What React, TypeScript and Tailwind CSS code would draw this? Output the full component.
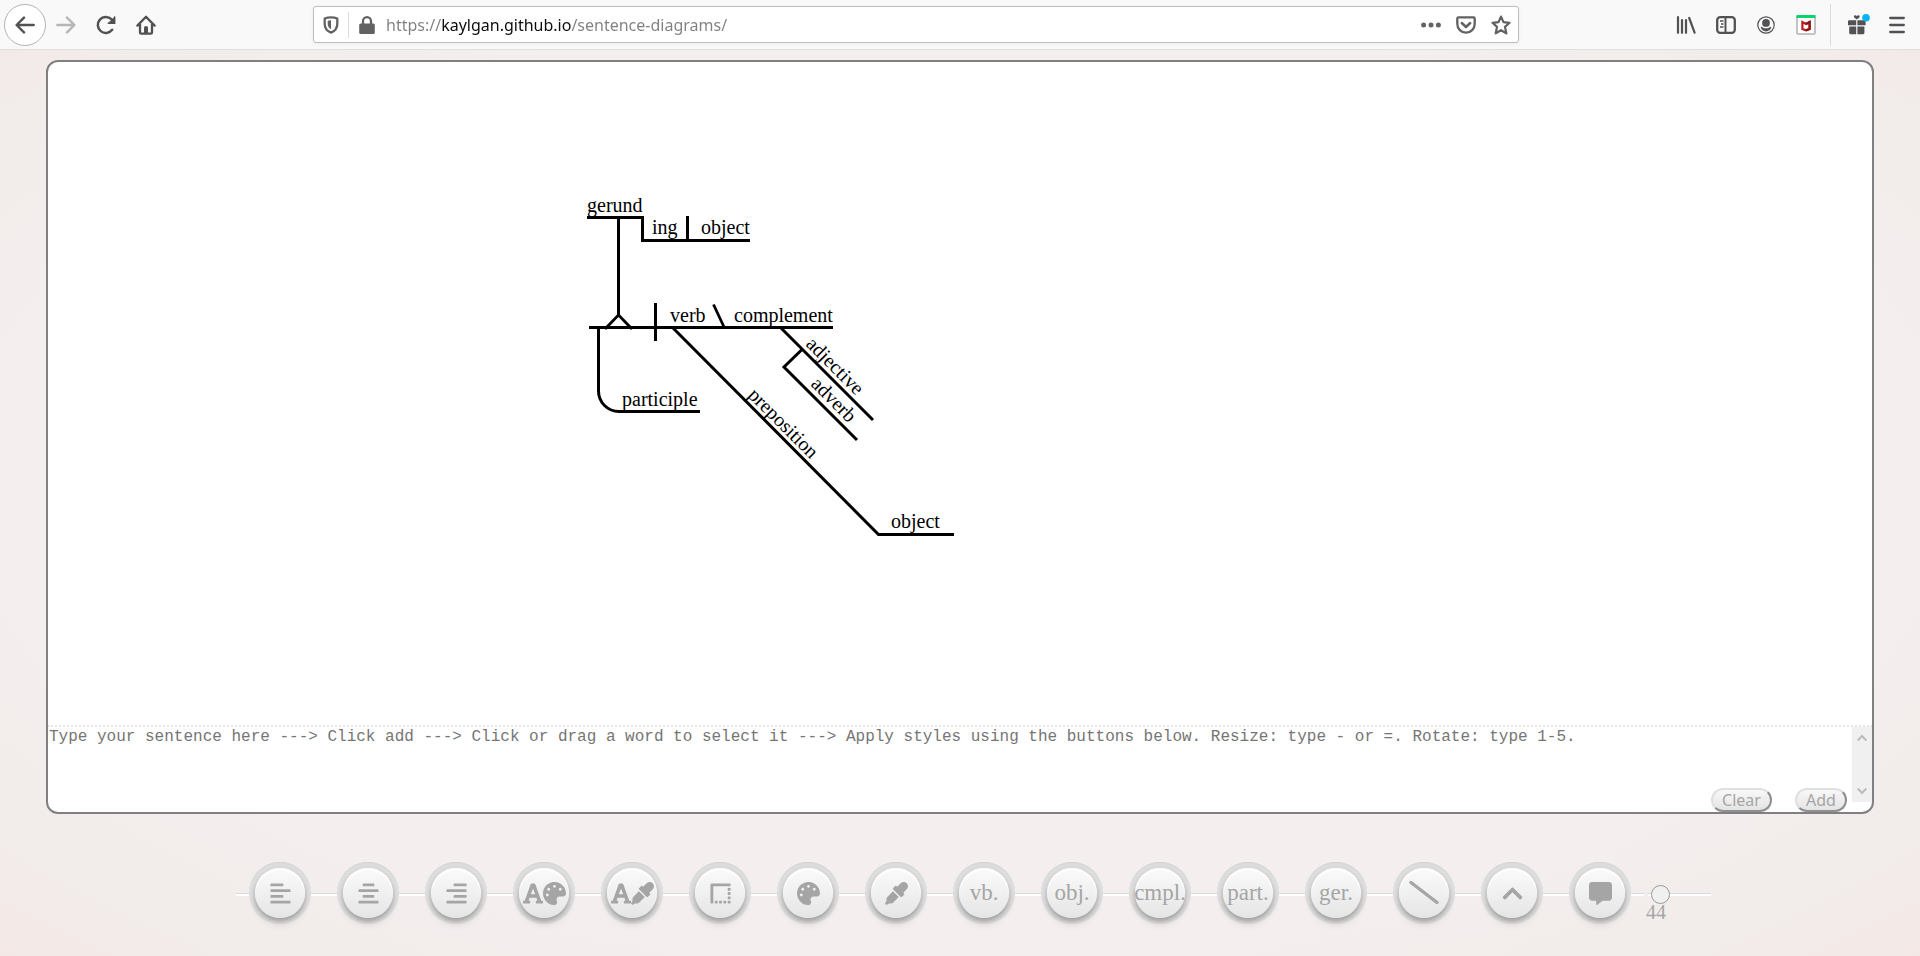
import { useState, type ReactNode } from "react";
import {
  FaAlignCenter,
  FaAlignLeft,
  FaAlignRight,
  FaBorderStyle,
  FaChevronUp,
  FaCommentAlt,
  FaEyeDropper,
  FaFont,
  FaPalette,
} from "react-icons/fa";

function BarButton({ label, className, children }: { label: string; className: string; children: ReactNode }) {
  return (
    <button type="button" aria-label={label} className={`flex h-10 shrink-0 items-center justify-center ${className}`}>
      {children}
    </button>
  );
}

function BrowserBar() {
  return (
    <header className="flex h-[50px] shrink-0 items-center border-b border-[#dedede] bg-[#f9f9fa] px-1 text-[#525254]">
      <nav className="flex shrink-0 items-center" aria-label="Browser">
        <button
          type="button"
          aria-label="Back"
          className="flex size-[42px] items-center justify-center rounded-full border border-[#b5b5b6] bg-white"
        >
          <svg width="20" height="18" viewBox="0 0 20 18" fill="none" stroke="currentColor" strokeWidth="2.4" strokeLinecap="round" strokeLinejoin="round">
            <path d="M18.7 9H2M9 1.6 1.6 9 9 16.4" />
          </svg>
        </button>
        <BarButton label="Forward" className="w-10 text-[#b6b6b7]">
          <svg width="20" height="18" viewBox="0 0 20 18" fill="none" stroke="currentColor" strokeWidth="2.4" strokeLinecap="round" strokeLinejoin="round">
            <path d="M1.3 9H18M11 1.6 18.4 9 11 16.4" />
          </svg>
        </BarButton>
        <BarButton label="Reload" className="w-10">
          <svg width="20" height="20" viewBox="0 0 20 20" fill="none" stroke="currentColor" strokeWidth="2.5" strokeLinecap="round">
            <path d="M16.2 14.8A8 8 0 1 1 15.4 4.2L17 6" />
            <path d="M18.9 1.4V8.6H11.6Z" fill="currentColor" stroke="none" />
            <path d="M18.6 2V8.2H12.4" strokeWidth="1.6" />
          </svg>
        </BarButton>
        <BarButton label="Home" className="w-10">
          <svg width="20" height="20" viewBox="0 0 20 20" fill="none" stroke="currentColor" strokeWidth="2.3" strokeLinecap="round" strokeLinejoin="round">
            <path d="M1.4 10.6 10 1.8l8.6 8.8M4 9v8.4q0 1.2 1.2 1.2h9.6q1.2 0 1.2-1.2V9" />
            <path d="M8 18.6v-6q0-1.6 2-1.6t2 1.6v6Z" fill="currentColor" stroke="none" />
          </svg>
        </BarButton>
      </nav>

      <div className="mx-[147px] flex h-[37px] min-w-0 flex-1 items-center rounded-[3px] border border-[#bdbdbe] bg-white text-[#626264] shadow-[0_1px_4px_rgba(0,0,0,0.06)]">
        <BarButton label="Tracking protection" className="w-[34px]">
          <svg width="16" height="18" viewBox="0 0 16 18">
            <path d="M8 1.3C10.500 1.300 12.500 1.700 14.300 2.500V8C14.300 12 12 15 8 16.600 4 15 1.700 12 1.700 8V2.500C3.500 1.700 5.500 1.300 8 1.300Z" fill="none" stroke="currentColor" strokeWidth="2.3" strokeLinejoin="round" />
            <path d="M8 4.300V13.300C5.800 12 4.700 10.300 4.700 8V4.800C5.700 4.500 6.800 4.300 8 4.300Z" fill="currentColor" />
          </svg>
        </BarButton>
        <span className="h-[26px] w-px bg-[#dcdcdc]" />
        <BarButton label="Site information" className="w-[35px]">
          <svg width="16" height="18" viewBox="0 0 16 18">
            <rect x="0.200" y="7.500" width="15.600" height="10.500" rx="1.500" fill="currentColor" />
            <path d="M4 8.500V5.200a4 4 0 0 1 8 0V8.500" fill="none" stroke="currentColor" strokeWidth="2.300" />
          </svg>
        </BarButton>
        <input
          type="text"
          aria-label="Address"
          defaultValue="https://kaylgan.github.io/sentence-diagrams/"
          className="ml-[2px] min-w-0 flex-1 bg-[linear-gradient(90deg,#808080_55px,#0c0c0d_55px,#0c0c0d_185px,#808080_185px)] bg-clip-text font-['Noto_Sans',sans-serif] text-[16px] leading-6 text-transparent caret-black outline-none"
        />
        <BarButton label="Page actions" className="w-[35px]">
          <svg width="20" height="6" viewBox="0 0 20 6" fill="currentColor">
            <circle cx="2.600" cy="3" r="2.500" />
            <circle cx="10" cy="3" r="2.500" />
            <circle cx="17.400" cy="3" r="2.500" />
          </svg>
        </BarButton>
        <BarButton label="Save to Pocket" className="w-[35px]">
          <svg width="20" height="18" viewBox="0 0 20 18" fill="none" stroke="currentColor" strokeWidth="2.300" strokeLinecap="round" strokeLinejoin="round">
            <path d="M2.400 1.300H17.600Q18.700 1.300 18.700 2.400V8A8.700 8.700 0 0 1 1.300 8V2.400Q1.300 1.300 2.400 1.300Z" />
            <path d="M5.800 7 10 11 14.200 7" strokeWidth="2.500" />
          </svg>
        </BarButton>
        <BarButton label="Bookmark this page" className="w-[35px]">
          <svg width="20" height="20" viewBox="0 0 20 20" fill="none" stroke="currentColor" strokeWidth="2.200" strokeLinejoin="round">
            <path d="M10 1.600 12.500 7.100 18.500 7.800 14 11.900 15.300 18.300 10 15.200 4.700 18.300 6 11.900 1.500 7.800 7.500 7.100Z" />
          </svg>
        </BarButton>
      </div>

      <BarButton label="Library" className="w-10">
        <svg width="20" height="18" viewBox="0 0 20 18" fill="none" stroke="currentColor" strokeWidth="2.200" strokeLinecap="round">
          <path d="M2 1.200V16.800M6 4V16.800M10 4V16.800M13.200 2 18.600 16.600" />
        </svg>
      </BarButton>
      <BarButton label="Sidebars" className="w-10">
        <svg width="20" height="18" viewBox="0 0 20 18" fill="none" stroke="currentColor">
          <rect x="1.200" y="1.200" width="17.600" height="15.600" rx="3" strokeWidth="2.300" />
          <path d="M9.500 1V17" strokeWidth="2" />
          <path d="M4 5H7.500M5 8H7.500M4 11H7.500" strokeWidth="1.300" />
        </svg>
      </BarButton>
      <BarButton label="Account" className="w-10">
        <svg width="18" height="18" viewBox="0 0 18 18" fill="currentColor">
          <circle cx="9" cy="9" r="8.200" fill="none" stroke="currentColor" strokeWidth="1.200" />
          <circle cx="9" cy="6.900" r="3.900" />
          <path d="M3.600 11Q4.800 10.600 5.600 11.400 7 12.300 9 12.300 11 12.300 12.400 11.400 13.200 10.600 14.400 11 13 15.300 9 15.400 5 15.300 3.600 11Z" />
        </svg>
      </BarButton>
      <BarButton label="McAfee WebAdvisor" className="w-10">
        <svg width="20" height="20" viewBox="0 0 20 20">
          <rect x="1" y="1" width="18" height="18" rx="0.500" fill="#fff" stroke="#8a8a8a" />
          <path d="M0.500 0H19.500V3H0.500Z" fill="#0bd370" />
          <path d="M6.400 14V7L10 9 13.600 7V14L10 15.300Z" fill="none" stroke="#c01818" strokeWidth="2.200" />
          <path d="M10 9 13.600 7V14L10 15.300" fill="none" stroke="#8c1215" strokeWidth="2.200" />
        </svg>
      </BarButton>
      <span className="mr-[7px] ml-1 h-[42px] w-px bg-[#dcdcdc]" />
      <BarButton label="What's new" className="w-[39px]">
        <svg width="24" height="22" viewBox="0 0 24 22" fill="currentColor">
          <path d="M3 6.200h7.200v5H2V7.200q0-1 1-1ZM11.400 6.200h7.200q1 0 1 1v4h-8.200ZM3.200 12.600h7v7.600H4.700q-1.500 0-1.500-1.500ZM11.400 12.600h7v6.100q0 1.500-1.500 1.500h-5.500Z" />
          <path d="M10.800 5.400 8 3.200Q7.400 1.400 9.200 1.200 10.300 1.200 10.800 2.200 11.300 1.200 12.400 1.200 14.200 1.400 13.600 3.200Z" />
          <circle cx="20" cy="3.800" r="3.800" fill="#00b3f4" />
        </svg>
      </BarButton>
      <BarButton label="Open menu" className="w-[39px]">
        <svg width="16" height="18" viewBox="0 0 16 18" stroke="currentColor" strokeWidth="2.300" strokeLinecap="round">
          <path d="M1.200 2H14.800M1.200 9H14.800M1.200 16H14.800" />
        </svg>
      </BarButton>
    </header>
  );
}

function Diagram() {
  return (
    <svg
      role="img"
      aria-label="Sentence diagram"
      className="mt-[128px] ml-[532px] block font-['Liberation_Serif',serif] text-[20px]"
      width="380"
      height="360"
      viewBox="580 190 380 360"
    >
      <g fill="none" stroke="#000" strokeWidth="3">
        <path d="M587 217.500H642.500V240.500H750M687.500 216V240M618.500 217V315" />
        <path d="M589 327.500H833M655.500 303V341" />
        <path d="M605 329 618.500 315 632 329" strokeWidth="2.800" />
        <path d="M713.500 304.500 724 327" strokeWidth="2.800" />
        <path d="M598.500 328V391A20.500 20.500 0 0 0 619 411.500H700" />
        <path d="M673 328 878.500 534.500H954" />
        <path d="M781 328 873 420M802 349.500 784 367 857 440" />
      </g>
      <text x="587" y="212">gerund</text>
      <text x="652" y="234">ing</text>
      <text x="701" y="234">object</text>
      <text x="670" y="322">verb</text>
      <text x="734" y="322">complement</text>
      <text x="622" y="406">participle</text>
      <text x="891" y="528">object</text>
      <text transform="translate(805 345) rotate(45)">adjective</text>
      <text transform="translate(810 385) rotate(45)">adverb</text>
      <text transform="translate(747 396) rotate(45)">preposition</text>
    </svg>
  );
}

const pill =
  "h-6 rounded-full border-2 border-t-[#e0e0e0] border-l-[#e0e0e0] border-r-[#8f8f8f] border-b-[#8f8f8f] bg-linear-to-b from-[#f8f8f8] to-[#e4e4e4] font-['Noto_Sans',sans-serif] text-[16px] leading-5 text-[#a5a5a5]";

function SentenceInput() {
  return (
    <div className="relative h-[87px] shrink-0">
      <div className="flex h-[77px] border-t-2 border-dotted border-[#e6e6e6]">
        <textarea
          aria-label="Sentence"
          placeholder="Type your sentence here ---> Click add ---> Click or drag a word to select it ---> Apply styles using the buttons below. Resize: type - or =. Rotate: type 1-5."
          className="min-w-0 flex-1 resize-none overflow-hidden pl-px font-['Liberation_Mono',monospace] text-[16px] leading-5 outline-none placeholder:text-[#757575]"
        />
        <div className="flex w-5 shrink-0 flex-col items-center justify-between bg-[#f0f0f0] py-[7px] text-[#bcbcbc]" aria-hidden="true">
          <svg width="10" height="8" viewBox="0 0 10 8" fill="none" stroke="currentColor" strokeWidth="2">
            <path d="M0.700 6.500 5 2 9.300 6.500" />
          </svg>
          <svg width="10" height="8" viewBox="0 0 10 8" fill="none" stroke="currentColor" strokeWidth="2">
            <path d="M0.700 1.500 5 6 9.300 1.500" />
          </svg>
        </div>
      </div>
      <div className="absolute right-[25px] bottom-0 flex gap-[23px]">
        <button type="button" className={`w-[61px] ${pill}`}>
          Clear
        </button>
        <button type="button" className={`w-[52px] ${pill}`}>
          Add
        </button>
      </div>
    </div>
  );
}

const tools: { label: string; face: ReactNode }[] = [
  { label: "Align left", face: <FaAlignLeft /> },
  { label: "Align center", face: <FaAlignCenter /> },
  { label: "Align right", face: <FaAlignRight /> },
  { label: "Text color", face: <><FaFont className="w-5 shrink-0" /><FaPalette className="shrink-0" /></> },
  { label: "Pick text color", face: <><FaFont className="w-5 shrink-0" /><FaEyeDropper className="shrink-0" /></> },
  { label: "Border style", face: <FaBorderStyle /> },
  { label: "Line color", face: <FaPalette /> },
  { label: "Pick line color", face: <FaEyeDropper /> },
  { label: "Verb", face: "vb." },
  { label: "Object", face: "obj." },
  { label: "Complement", face: "cmpl." },
  { label: "Participle", face: "part." },
  { label: "Gerund", face: "ger." },
  {
    label: "Line",
    face: (
      <svg width="30" height="24" viewBox="0 0 30 24" stroke="currentColor" strokeWidth="3.400" strokeLinecap="round">
        <path d="M2 1.500 28 21.500" />
      </svg>
    ),
  },
  { label: "Up", face: <FaChevronUp /> },
  { label: "Comment", face: <FaCommentAlt /> },
];

const rail = "mt-[3px] h-[3px] border-t border-b-2 border-t-[#dcd9d9] border-b-white";

function Toolbar() {
  const [size, setSize] = useState(44);
  return (
    <footer className="flex shrink-0 justify-center pt-12 pb-8 pl-[27px] font-['Liberation_Serif',serif] text-[#a5a5a5]">
      <ul className="flex">
        {tools.map((tool) => (
          <li key={tool.label} className="flex w-[88px] items-center">
            <span className={`flex-1 ${rail}`} />
            <span className="flex size-[62px] items-center justify-center rounded-full bg-linear-to-b from-[#dcdcdc] to-[#e4e3e3] shadow-[inset_0_1px_1px_#d6d6d6]">
              <button
                type="button"
                aria-label={tool.label}
                className="flex size-[50px] items-center justify-center rounded-full bg-linear-to-b from-[#fbfbfb] to-[#e5e5e5] text-[23px] leading-7 shadow-[0_3px_5px_rgba(0,0,0,0.25),0_7px_9px_rgba(0,0,0,0.08),inset_0_2px_2px_#fff]"
              >
                {tool.face}
              </button>
            </span>
            <span className={`flex-1 ${rail}`} />
          </li>
        ))}
      </ul>
      <label className="ml-1 flex w-[63px] flex-col pt-[22px]">
        <span className="flex h-5 items-center bg-[linear-gradient(#dcd9d9,#dcd9d9),linear-gradient(#fff,#fff)] bg-[length:100%_1px,100%_2px] bg-[position:0_9px,0_10px] bg-no-repeat">
          <input
            type="range"
            aria-label="Size"
            min={40}
            max={100}
            value={size}
            onChange={(e) => setSize(Number(e.target.value))}
            className="h-5 w-full appearance-none bg-transparent [&::-webkit-slider-thumb]:size-[19px] [&::-webkit-slider-thumb]:appearance-none [&::-webkit-slider-thumb]:rounded-full [&::-webkit-slider-thumb]:border [&::-webkit-slider-thumb]:border-solid [&::-webkit-slider-thumb]:border-[#999] [&::-webkit-slider-thumb]:bg-[#f0f0f0]"
          />
        </span>
        <output className="-ml-[2px] text-[20px] leading-4">{size}</output>
      </label>
    </footer>
  );
}

export default function App() {
  return (
    <div className="flex min-h-screen flex-col bg-[radial-gradient(ellipse_at_center,#f4eeee_70%,#f2edeb_86%,#f3e8e6_100%)]">
      <BrowserBar />
      <main className="flex flex-1 flex-col">
        <section className="mx-[46px] mt-[10px] flex flex-1 flex-col overflow-hidden rounded-[12px] border-2 border-[#808080] bg-white">
          <div className="min-h-[500px] flex-1">
            <Diagram />
          </div>
          <SentenceInput />
        </section>
        <Toolbar />
      </main>
    </div>
  );
}
